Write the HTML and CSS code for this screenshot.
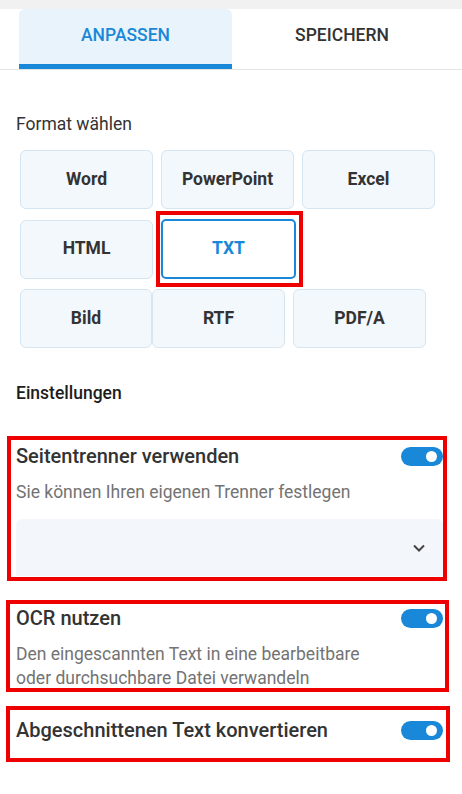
FILE: index.html
```html
<!DOCTYPE html>
<html lang="de">
<head>
  <meta charset="UTF-8" />
  <meta name="viewport" content="width=device-width, initial-scale=1.0" />
  <title>Format anpassen</title>
  <link rel="stylesheet" href="styles.css">
</head>
<body>

  <div class="top-strip"></div>

  <nav class="tabs">
    <a class="tab active" href="#anpassen">ANPASSEN</a>
    <a class="tab" href="#speichern">SPEICHERN</a>
  </nav>

  <main>
    <section class="formats">
      <h2 class="label">Format wählen</h2>

      <div class="format-row row-1">
        <button class="format">Word</button>
        <button class="format">PowerPoint</button>
        <button class="format">Excel</button>
      </div>

      <div class="format-row row-2">
        <button class="format">HTML</button>
        <div class="mark mark-txt">
          <button class="format selected">TXT</button>
        </div>
      </div>

      <div class="format-row row-3">
        <button class="format narrow">Bild</button>
        <button class="format">RTF</button>
        <button class="format spaced">PDF/A</button>
      </div>
    </section>

    <section class="settings">
      <h2 class="label strong">Einstellungen</h2>

      <div class="mark setting setting-1">
        <div class="setting-head">
          <span class="setting-title">Seitentrenner verwenden</span>
          <span class="toggle on"></span>
        </div>
        <p class="setting-desc">Sie können Ihren eigenen Trenner festlegen</p>
        <div class="select">
          <svg class="chevron" width="14" height="10" viewBox="0 0 14 10">
            <path d="M2 2.5 L7 7.5 L12 2.5" fill="none" stroke="#444" stroke-width="2" />
          </svg>
        </div>
      </div>

      <div class="mark setting setting-2">
        <div class="setting-head">
          <span class="setting-title">OCR nutzen</span>
          <span class="toggle on"></span>
        </div>
        <p class="setting-desc">Den eingescannten Text in eine bearbeitbare<br>oder durchsuchbare Datei verwandeln</p>
      </div>

      <div class="mark setting setting-3">
        <div class="setting-head">
          <span class="setting-title">Abgeschnittenen Text konvertieren</span>
          <span class="toggle on"></span>
        </div>
      </div>
    </section>
  </main>

</body>
</html>
```

FILE: styles.css
```css
body {
  font-family: Roboto, 'Noto Sans', sans-serif;
  margin: 0;
  padding: 0;
  background: #fff;
  color: #333;
}

.top-strip {
  height: 9px;
  background: #f1f1f1;
}

.tabs {
  display: flex;
  padding-left: 19px;
  border-bottom: 1px solid #e4e4e4;
}

.tab {
  width: 220px;
  height: 55px;
  box-sizing: border-box;
  padding-bottom: 3px;
  display: flex;
  align-items: center;
  justify-content: center;
  text-decoration: none;
  font-size: 17.5px;
  font-weight: 500;
  color: #333;
  border-bottom: 5px solid transparent;
  height: 60px;
}

.tab.active {
  width: 213px;
  color: #1a88d8;
  background: #e8f3fc;
  border-radius: 6px 6px 0 0;
  border-bottom-color: #1a88d8;
}

main {
  padding: 0;
}

.label {
  margin: 0;
  padding-left: 16px;
  font-size: 17.5px;
  line-height: 24px;
  font-weight: 400;
  color: #333;
}

.label.strong {
  font-weight: 500;
  color: #1c1c1c;
}

.formats {
  padding-top: 42px;
}

.formats .label {
  margin-bottom: 14px;
}

.format-row {
  display: flex;
  align-items: center;
  padding-left: 20px;
}

.row-1 {
  gap: 8px;
  margin-bottom: 2px;
}

.row-2 {
  gap: 3px;
  margin-bottom: 2px;
}

.format {
  width: 133px;
  height: 59px;
  box-sizing: border-box;
  border: 1px solid #d5e5f1;
  border-radius: 6px;
  background: #f3f8fc;
  font-family: inherit;
  font-size: 17.5px;
  font-weight: 700;
  color: #333;
  padding: 0 0 2px;
}

.format.narrow {
  width: 132px;
}

.format.spaced {
  margin-left: 8px;
}

.mark {
  border: 4px solid #ee0000;
  box-sizing: border-box;
}

.mark-txt {
  width: 147px;
  height: 76px;
  padding: 4px 0 0 1px;
}

.format.selected {
  width: 135px;
  height: 60px;
  background: #fff;
  border: 2px solid #1a88d8;
  border-radius: 5px;
  color: #1a88d8;
}

.settings {
  padding-top: 33px;
}

.settings .label {
  margin-bottom: 31px;
}

.setting-head {
  display: flex;
  align-items: center;
  justify-content: space-between;
  height: 22px;
}

.setting-title {
  font-size: 20px;
  font-weight: 500;
  line-height: 22px;
  color: #333;
}

.toggle {
  position: relative;
  width: 42px;
  height: 19px;
  border-radius: 10px;
  background: #e0e0e0;
}

.toggle.on {
  background: #1a88d8;
}

.toggle.on::after {
  content: "";
  position: absolute;
  right: 6px;
  top: 4px;
  width: 11px;
  height: 11px;
  border-radius: 50%;
  background: #fff;
}

.setting-desc {
  margin: 0;
  font-size: 17.5px;
  line-height: 24px;
  color: #737373;
}

.setting-1 {
  margin: 0 15px 19px 7px;
  height: 145px;
  padding: 5px 0 0 5px;
}

.setting-1 .setting-desc {
  margin-top: 13px;
}

.select {
  margin-top: 15px;
  height: 57px;
  background: #f3f7fb;
  border-radius: 6px 6px 0 0;
  display: flex;
  align-items: center;
  justify-content: flex-end;
  padding-right: 17px;
}

.chevron {
  display: block;
  margin-top: 1px;
}

.setting-2 {
  margin: 0 13px 14px 6px;
  height: 92px;
  padding: 3px 2px 0 6px;
}

.setting-2 .setting-desc {
  margin-top: 13px;
}

.setting-3 {
  margin: 0 12px 0 6px;
  height: 56px;
  padding: 9px 3px 0 6px;
}
```
